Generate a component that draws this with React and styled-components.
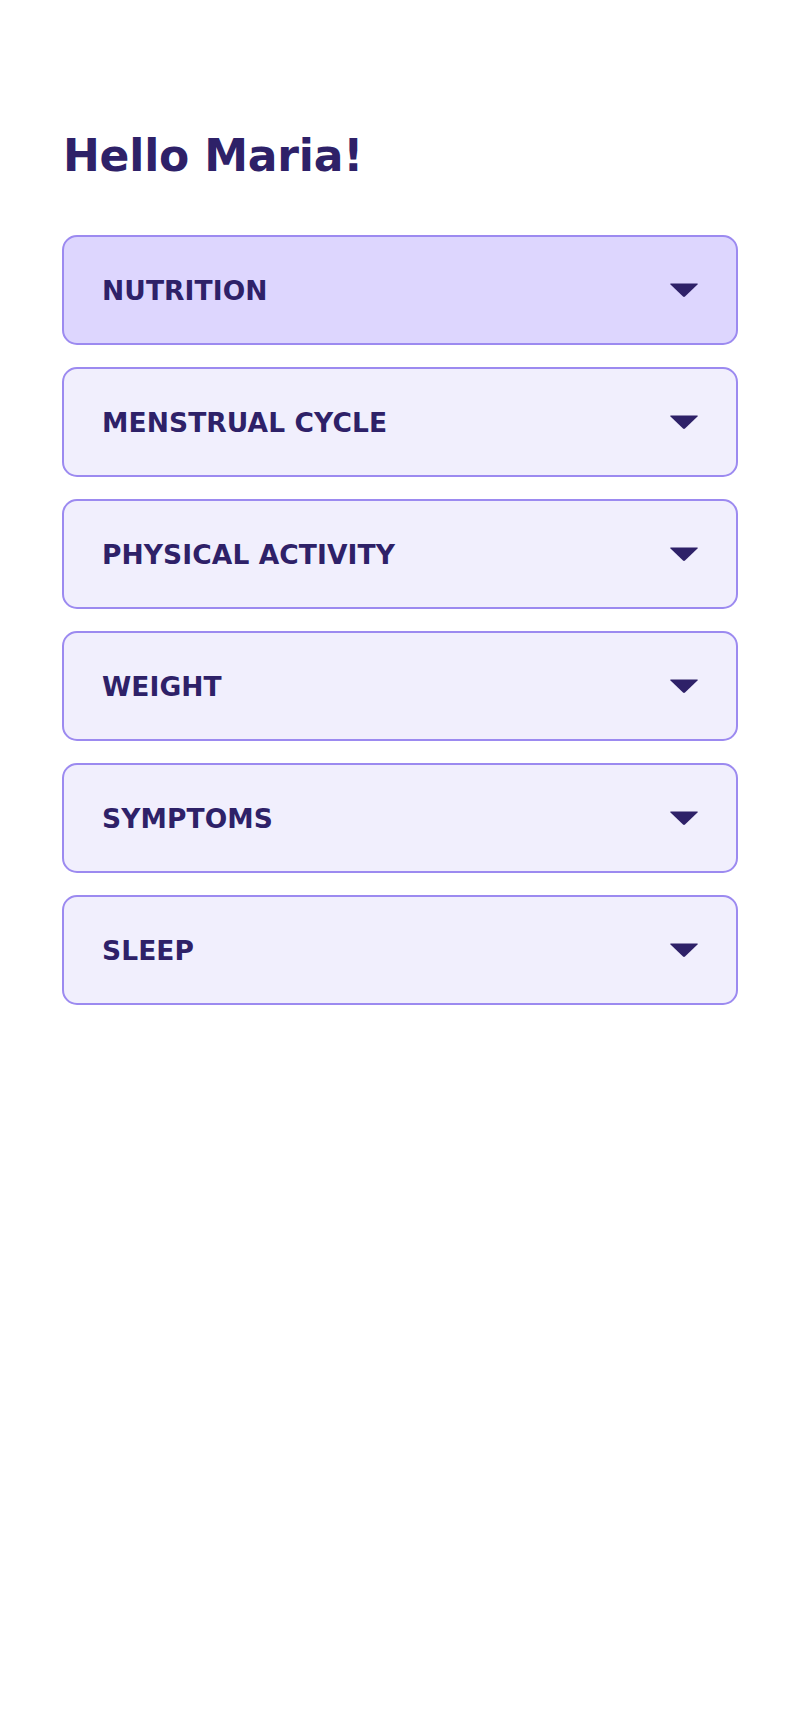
import React from 'react';
import styled, { createGlobalStyle } from 'styled-components';

const GlobalStyle = createGlobalStyle`
  html, body {
    margin: 0;
    padding: 0;
    background: #ffffff;
  }
  body {
    font-family: 'DejaVu Sans', 'Open Sans', sans-serif;
  }
`;

const Page = styled.div`
  min-height: 1734px;
  padding: 126px 62px 0 62px;
  box-sizing: border-box;
`;

const Title = styled.h1`
  margin: 0 0 49px 1px;
  font-size: 44px;
  line-height: 60px;
  font-weight: 700;
  color: #2e2168;
  letter-spacing: -0.2px;
`;

const List = styled.div`
  display: flex;
  flex-direction: column;
  gap: 22px;
`;

const Section = styled.button`
  display: flex;
  align-items: center;
  justify-content: space-between;
  height: 110px;
  padding: 0 37px 0 38px;
  box-sizing: border-box;
  border: 2.5px solid #9c8af0;
  border-radius: 15px;
  background: ${(p) => (p.$active ? '#ddd6fe' : '#f1effd')};
  cursor: pointer;
  width: 100%;
  font-family: inherit;
`;

const Label = styled.span`
  font-size: 26.5px;
  font-weight: 700;
  color: #2e2168;
  letter-spacing: 0.1px;
  text-transform: uppercase;
`;

const Caret = () => (
  <svg width="30" height="16" viewBox="0 0 30 16">
    <path d="M2 1.5 H28 Q29.5 1.5 28.5 2.6 L16 14.5 Q15 15.4 14 14.5 L1.5 2.6 Q0.5 1.5 2 1.5 Z" fill="#2e2168" />
  </svg>
);

const sections = [
  'Nutrition',
  'Menstrual Cycle',
  'Physical Activity',
  'Weight',
  'Symptoms',
  'Sleep',
];

const App = () => (
  <Page>
    <GlobalStyle />
    <Title>Hello Maria!</Title>
    <List>
      {sections.map((s, i) => (
        <Section key={s} $active={i === 0}>
          <Label>{s}</Label>
          <Caret />
        </Section>
      ))}
    </List>
  </Page>
);

export default App;
